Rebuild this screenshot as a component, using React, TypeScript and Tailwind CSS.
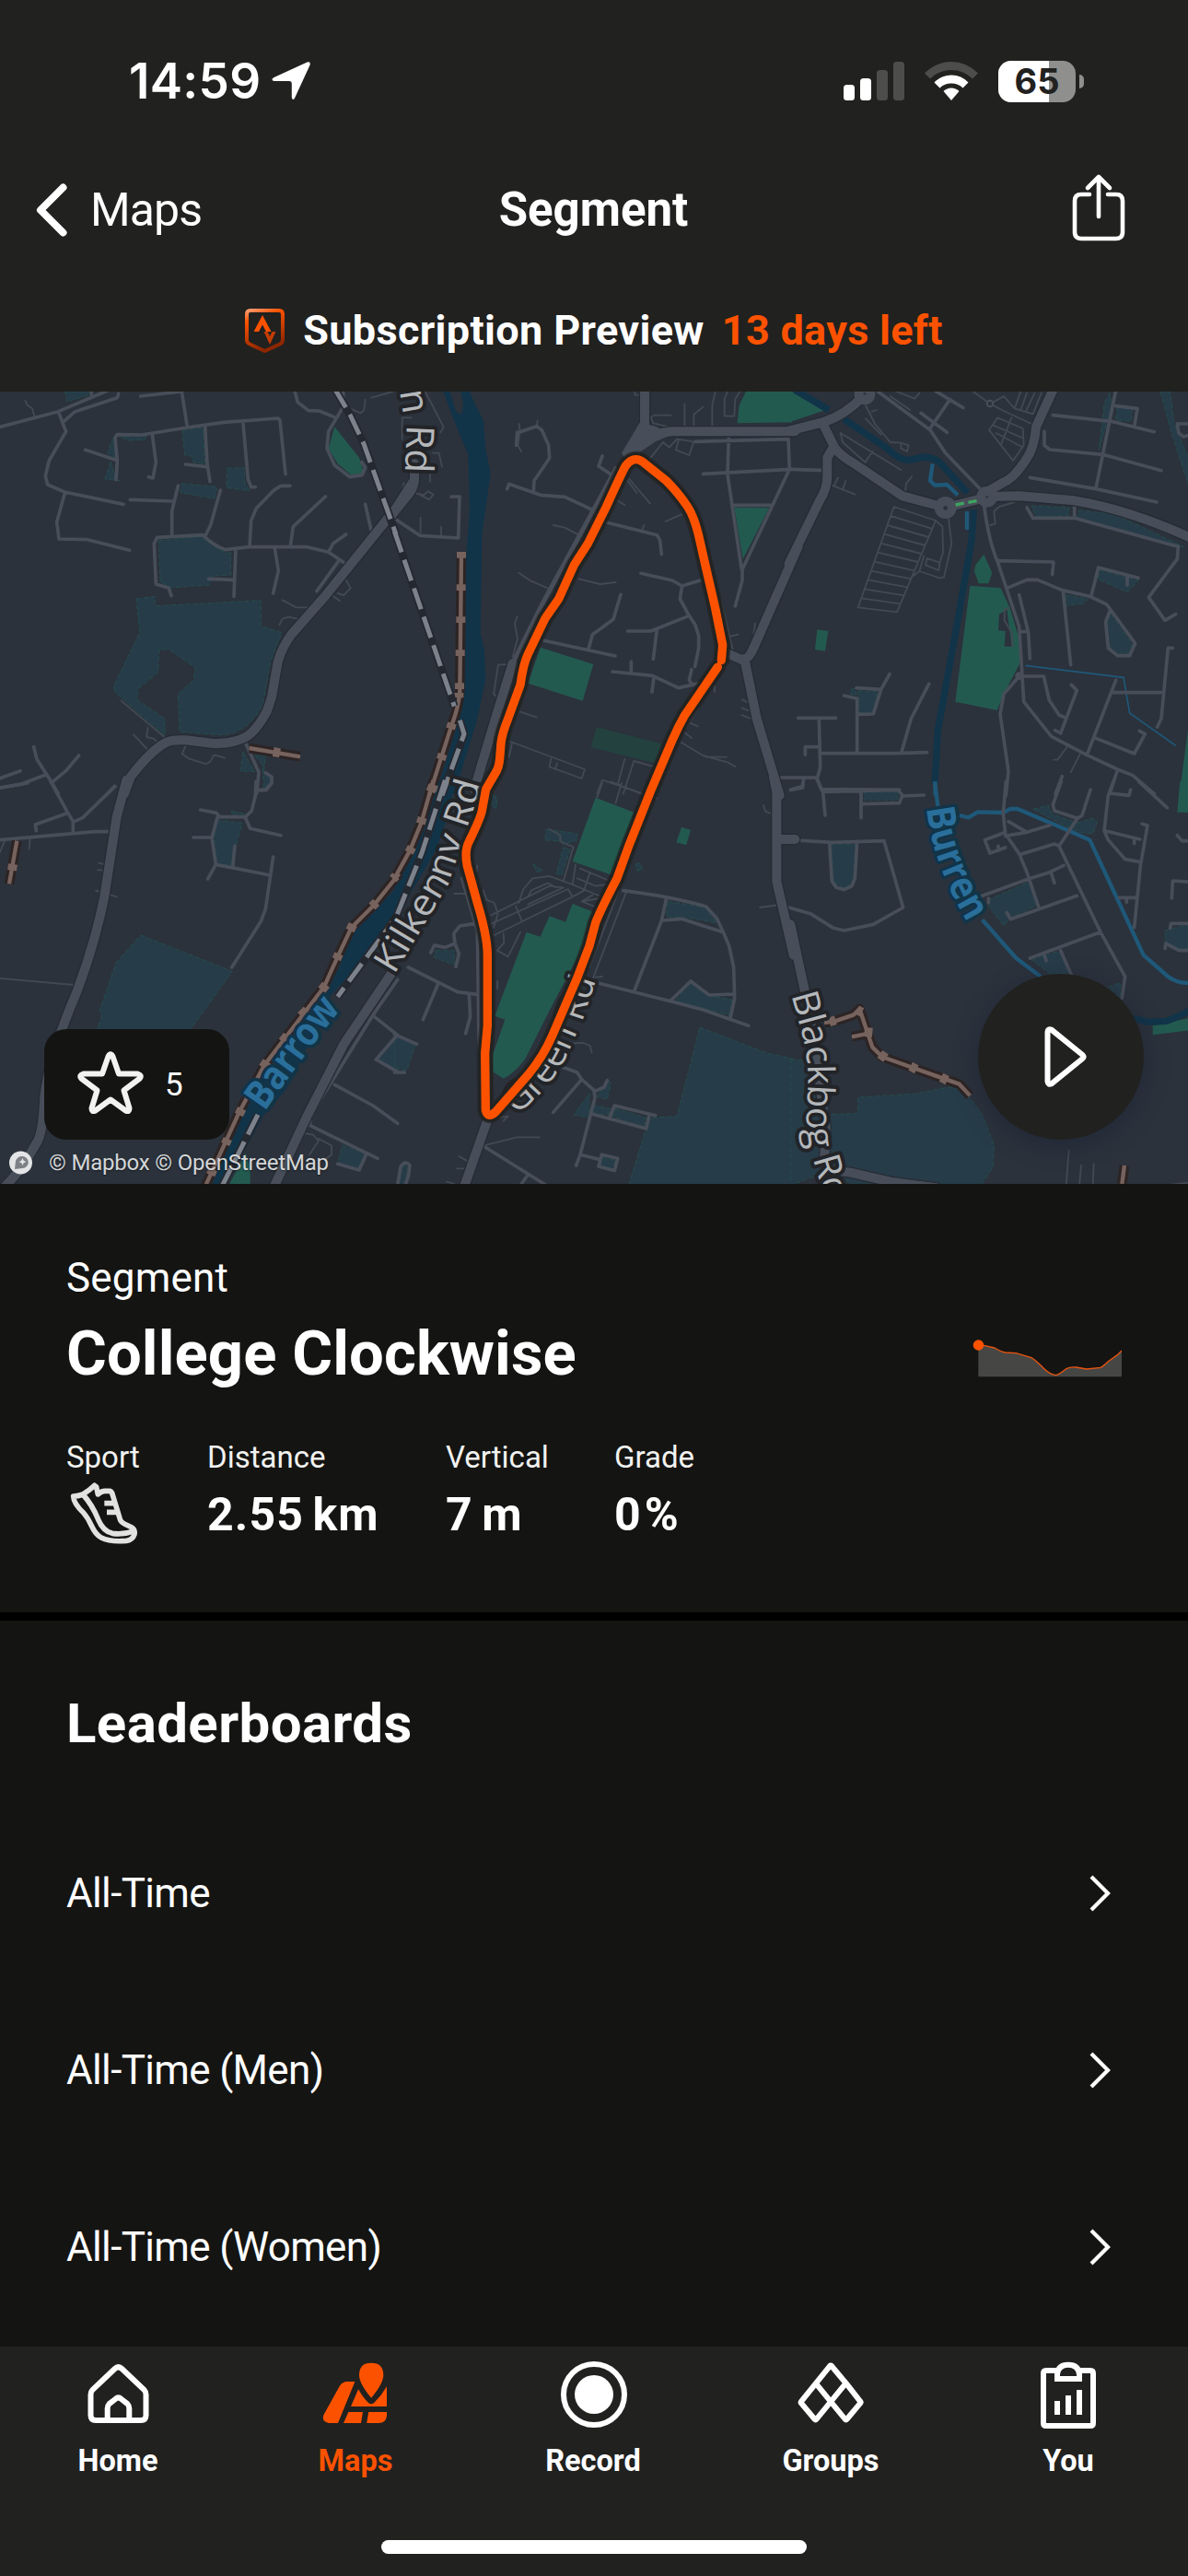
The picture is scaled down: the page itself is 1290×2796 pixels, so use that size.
import React from "react";

type Tile = {
  x: number;
  y: number;
  park?: string;
  green?: string;
  cut?: string;
  deep?: string;
  stream?: string;
  streamDeep?: string;
  thin?: string;
  minor?: string;
  major?: string;
  path?: string;
  pathTicks?: string;
  rail?: string;
};

/* Map geometry, one entry per map tile. Each tile uses 3 units per pixel. */
const TILES: Tile[] = [
  {
    x: 0,
    y: -5,
    park: "M212 15H292V25L218 48Z M388 160H480L470 172L420 174Z M370 165L350 215L375 230Z M360 245L342 300L390 305L378 300Z M594 142L660 132L668 250L630 245L625 225L602 222Z M740 265L795 262L798 312L812 338L738 328Z M592 315L707 325L698 364L588 344Z M518 500L655 487L700 520L735 540H752V612L700 615L680 645L560 653L522 635Z M445 690L505 682V713L850 695V778L918 800L880 900L855 1040Q800 1130 720 1133L585 1122L580 1000L630 955L637 915L548 853L518 858L515 928L448 985V1020L537 1080V1135L375 995L370 975L455 800Z M792 1190L830 1252H783Z M830 1200H865L860 1250L885 1280L860 1310L855 1230Z",
    green: "M1090 130L1170 230L1185 280L1145 287L1100 250L1070 200Z",
    minor:
      "M-10 133L190 80L350 12M190 80L215 145L160 240L148 290L155 318L210 342L402 382M208 112L245 80L382 35L386 22M298 15V30M212 342L185 440L192 495L285 497L422 532M458 30L592 15L610 130M378 302L382 240L375 165L382 155L462 156L610 132L730 115L905 102L912 108L930 284M278 205L378 238M496 155L508 245L498 297L484 293M668 130L675 250L684 308M604 252L672 260M792 118L808 300L818 326H832M580 322L560 405V484M424 367L562 372M718 336L686 450L668 486M558 680L550 655L508 642L502 510L512 490L660 482Q700 520 735 530L810 521H1000L1070 538L1130 578M813 520L818 435L835 395L890 338L915 322H945M946 518L955 455L1060 357M1070 538L1085 510L1127 480M1190 382L1212 480M895 525L907 598L890 672M768 525L762 682M680 625L762 628M1102 568L1032 665M960 12L970 50L1005 77L1040 78L1088 98M1118 12V65L1070 145L1065 200L1090 255L1140 293L1180 287L1190 262L1178 245M110 1172L120 1212L170 1290L190 1325M257 1200L215 1250L172 1285M-10 1307L70 1293L148 1263M66 1250L-10 1278M373 1300L350 1325M798 1155L843 1255L836 1325M840 1314L865 1312L885 1290V1270L865 1256",
    thin: "M82 45L90 60L105 70L112 95M1120 62L1175 85L1186 75L1190 42M1210 35L1280 15M1128 630L1142 655L1120 678L1100 672M1085 680L1107 697M920 694L965 718H1000M980 757L940 749L920 755L910 775M395 1022L545 1148M435 1132L485 1185M482 1110L477 1140L500 1145L520 1162M605 1168L593 1195L615 1210L672 1228L685 1220L697 1198L732 1208",
    major:
      "M1345 310L1290 395L1060 680L950 805Q920 845 905 895L885 1010L870 1055Q830 1130 790 1145Q740 1165 690 1160L605 1150Q560 1148 540 1158Q490 1185 425 1270L405 1325",
    path: "M812 1176L978 1204",
    pathTicks: "M890 1188L912 1192",
    rail: "M1090 5L1140 90L1185 185L1290 480",
  },
  {
    x: 430,
    y: -5,
    deep: "M155 15L185 100L235 220L240 400L228 560L215 1050L130 1325H190L265 1080L292 950L288 860L275 800L280 480L300 340L308 285L292 200L285 110L250 40L240 15H212L220 60L212 90L195 80L175 15Z",
    green:
      "M1140 15H1290V115L1112 118L1118 60Z M1102 392L1216 394L1130 560Z M470 848L643 903L608 1022L430 965Z",
    minor:
      "M-10 425L78 484L203 492L207 357H180M362 332L368 316L470 352L550 358L640 400M448 340L450 305L500 232L497 190L475 140L458 128L403 147M672 225L660 258L705 288M688 442L850 482L860 500L865 545M798 607L900 630L932 648L990 630M932 648L925 690L955 745L975 775L986 810V850L974 910M955 745L830 795H755M850 790L838 886M732 676L708 757L640 806L628 850M482 826L714 876M705 927L835 940L920 980L1010 960M766 894V932M840 945L834 993M963 920L955 955L965 968M1000 283L1290 268M1084 160L1080 285L1126 595M975 178L1278 170L1282 268L1128 595V630L1105 714M1096 385H1228M395 147L392 190",
    thin: "M80 474V425M147 484V455M60 345L90 352L105 340L122 350L108 367L80 352M40 320L25 313L20 345L38 340M95 15L155 130L145 148M150 260L140 215H120M20 170V100H50M111 270V308M458 128L461 110M400 120L405 147M403 147L397 190L408 210M513 450L550 458L595 482M400 605L440 632L505 660M595 625L665 642L716 636M395 748L387 770L396 820L380 880M375 904H333L318 1000L338 1016M750 300L785 345M760 300L828 380M722 370L745 385M878 438L930 415M808 450L800 470M405 1058L458 1076M1030 130V60L1040 15M1070 40V95H1102L1105 40L1120 15M1070 40L1080 15M840 92H896M835 95L830 100L838 118L890 130M940 130V55M970 130V90L1000 65M830 230L870 180L890 197L915 170L970 178L955 222L912 205L920 175M778 15V26H790M1060 700L1100 870M1090 812L1115 806M1165 805L1170 770M1128 1018L1155 1032M1126 1045L1155 1056M1126 1068L1160 1082M930 1158L1000 1200L1080 1222L1105 1236M1010 1205H1077M950 1090L983 1105M940 1125L963 1143M985 1045L945 1110M1038 975V993M373 1155L615 1245L605 1275L500 1237L505 1210M378 1160L368 1205M525 1225L518 1245M835 1235L775 1218L740 1325M672 1280L850 1340M745 1212L722 1295M672 1280L655 1325",
    major:
      "M60 250V305Q55 335 40 350L-20 425M810 5V130Q800 170 755 235M820 160Q850 150 900 145H1300M1310 520L1165 850Q1150 885 1130 890L1085 870M1135 885L1175 1080L1250 1330M380 900L330 1060L255 1310",
    path: "M213 540L208 990Q205 1040 180 1105L108 1330",
    pathTicks:
      "M213 537V557M212 643V663M211 748V768M209 856V876M207 964V984M205 996V1012M183 1095L177 1113M152 1195L146 1213M120 1298L112 1318",
    rail: "M-5 470L60 660L190 1040M208 1085L222 1130L150 1330",
  },
  {
    x: 860,
    y: -5,
    park: "M780 387L902 393L900 420L795 422Z M935 402L1050 415L1275 520H1250L930 430Z M1060 68L1108 70L1105 112L1055 108Z M1018 50L1035 20L1045 80L1030 100L1000 205Z M1200 15H1232L1245 120L1295 240V330L1240 160Z M1005 595L1128 630L1092 668L995 625Z M893 678L965 690L950 705L893 712Z M1040 740L1110 840L1095 868L1050 865L1028 830L1020 765Z M215 990L280 992L262 1062L220 1060Z M192 985L205 982L210 1005L190 1000Z",
    green:
      "M0 15L110 75L0 112Z M625 545L598 580L594 600L608 640H640L652 605Z M580 647L680 655L710 720L740 820L742 900L690 1000L668 1053L532 1025Z M82 790L118 795L108 860L75 855Z M1295 1080V1325H1262Z",
    cut: "M675 740L700 725L716 845H692L695 795L672 793Z",
    streamDeep:
      "M10 10L120 75M170 105L310 200Q350 240 380 238L430 228Q470 230 490 255L572 345M592 400L585 500L540 760L500 980L475 1120L465 1290",
    stream: "M458 250L450 305L465 320L505 318L540 352M570 405V465M466 1285L467 1330",
    minor:
      "M280 15L450 140L500 215L620 340M470 15L558 68M515 40L450 135M420 85L505 148M-10 268L110 272M625 380Q640 500 670 570L740 780L750 940L755 1025L845 1138L960 1198L1060 1245L1110 1265L1180 1325M672 566L852 570L848 610M700 655L765 628H800L880 662L970 682L1025 708L1045 735L1118 835L1100 875H1060L1030 850L1022 765L1035 730M975 680L998 588L1128 622M1092 615V645M883 665L908 905M740 677L770 800L775 885M745 797H768M765 393L785 427H920L1258 520L1255 560L1162 685L1215 760L1250 740M920 375V427M850 92L1040 112L1180 146M822 145V190L840 204L1012 220L1203 272M775 295L990 332L1188 375M990 330L1055 10M1055 62L1125 70L1115 130M1300 120H1255L1260 150L1275 162L1300 155M740 942H820L838 1020L870 1068L888 1076M910 970L928 988L875 1128L857 1118M740 942L690 1000L678 1065L705 1250L697 1330M1055 955L962 1195M1040 995H1208M1240 850H1225L1203 1080L1190 1107M985 1142L1115 1194L1150 1130L1132 1120M1060 1248L1035 1325M880 1268L858 1325M20 1078H143M88 1078L92 1240L82 1275L95 1310L350 1312M43 1198V1172H90M95 1193H345L440 1190M210 980L290 985L318 935M170 1005L212 1015V1190M218 1066L265 1065L290 985M446 967L388 1080L358 1185M-45 1272H80M0 1310L35 1300L38 1275",
    thin: "M332 390L215 718L342 733L468 435ZM321 420L457 462M311 450L445 489M300 479L434 516M289 509L422 543M279 539L411 570M268 569L399 598M258 599L388 625M247 628L376 652M236 658L365 679M226 688L353 706M468 435L490 455L492 540L480 575M510 430L520 510L495 620L480 622L415 600L430 550M440 558L482 572L478 597L435 580ZM388 620L415 600M158 150L355 270M158 150L165 180L238 245L262 210M240 60L270 120L320 180L355 182L380 190L375 210L355 200V182M240 103L290 155M275 75L260 80M320 30L385 75M340 15L400 38L415 20M590 15L645 55L690 78L780 120M645 55L690 30L725 70L785 88L812 20M745 75L765 20M725 70L745 15M762 80L790 20M670 100L752 135L755 190L720 240L642 140ZM655 125L750 165M665 150L748 195M715 100L680 190M130 320L205 350M150 295L138 320M175 305L165 335M368 350L372 315L390 292M725 375L675 390L658 405L662 445L645 450M718 845V805L692 760V725L708 720M898 1170L865 1214H852M938 1195L908 1255",
    major:
      "M235 28Q170 95 100 115L-10 143M100 118L140 200Q160 225 200 248L360 355L500 393M135 195L115 230V290Q115 330 90 370L-10 575M850 10L795 130Q790 200 760 240Q720 300 690 310L620 350M500 393L640 358M620 358L740 355L920 370Q1100 400 1300 492",
  },
  {
    x: 0,
    y: 425,
    park: "M458 495L757 613L615 810H312L332 760L325 740L378 585Z M705 120L790 130L765 215L750 268L705 262L698 180Z M755 90L800 102H755Z M1295 830L1222 900L1295 938Z M1115 1180L1190 1205L1165 1255L1100 1240Z",
    deep: "M1295 338L1150 480L1105 600L1060 680L930 860L790 1060L690 1310H735L860 1080L930 1000L960 950L1070 700L1180 580L1295 440Z",
    green: "M745 1310L800 1205L815 1250V1310Z",
    minor:
      "M-10 17L90 0M165 -5L220 95L238 125V160M375 10L270 112L238 127M118 155L115 135L218 98M-10 186L310 158H365M653 87L705 97L715 110H800L820 90L832 40L834 -5M843 22H868L885 0M800 115L815 148L915 170M630 177H690M708 112L690 178L703 265L677 312M703 265L880 300M758 275L765 205M890 240L865 410L850 450L755 600M1295 640L1215 755L1010 1085V1115L1230 1222M1215 757L1295 820M1290 825L1225 900L1295 940M1090 982L1215 1050L1295 1108M1100 1240L1170 1260L1195 1205",
    thin: "M-5 635L240 657M98 180L95 215M15 188L0 225M322 260L345 265M318 283H340M312 350L380 370M990 1140L1020 1145L1038 1165L1008 1210M1038 1158L1080 1180V1210L1060 1225",
    major:
      "M412 -10L380 110L340 370Q310 520 250 680Q160 890 145 1020Q140 1140 120 1170Q70 1260 15 1315M1275 620L1120 850L1000 1085L890 1320",
    path: "M55 188L30 328M1300 295L1220 395L1145 470L1100 565L1055 665L990 750L860 920L780 1070L670 1310",
    pathTicks:
      "M42 264L39 284M1290 302L1280 312M1226 388L1212 402M1150 460L1140 480M1104 556L1096 574M1062 656L1048 674M1000 738L980 758M936 822L920 842M870 906L856 926M788 1060L778 1080M742 1158L734 1176M694 1258L686 1276",
    rail: "M1295 430L1100 695M840 1080L722 1315",
  },
  {
    x: 430,
    y: 425,
    park: "M315 40L328 45V82L310 75Z M490 150L590 165V185L545 200L535 190L485 185Z M545 210L568 215L540 300L522 295Z M445 262L478 285L460 290Z M780 265L795 260L803 283L785 285Z M130 545L190 545V592L125 568Z M885 385L1010 405L1045 455L960 440L880 435Z M960 648L1015 690L1095 705L1085 755L910 710Z M-5 818L65 850L35 935L-5 930Z M990 795L1210 880L1295 898V1310H758L825 1090L915 1085Z M630 1010V1090L580 1080Z M690 970L700 975L688 1030L655 1020Z M715 1060L815 1090L808 1120L705 1085Z M640 1048L700 1060L690 1080L645 1075Z M672 1218L715 1228L705 1258L665 1245Z M0 1310L15 1250L35 1240L40 1260L25 1310Z",
    deep: "M130 -5H195L160 130L130 220L-5 445V335L30 270L60 200Z",
    green:
      "M650 47L775 95L705 300L575 255Z M930 143L960 153L945 202L913 193Z M575 393L650 422L600 552L500 740L420 900Q380 950 350 962L315 940V885L355 770L322 758L425 485L470 500L500 433L552 452Z",
    minor:
      "M740 350Q900 370 1010 402L1045 440L1068 490L1085 530L1100 600L1103 700L1090 762M880 378L865 448L775 680M868 447L930 442L1065 485M655 650L715 665L900 712L1000 738L1148 790M895 708L960 645L1020 690L1100 687M40 600L200 680L265 688M138 652L88 770M238 688L242 760L227 815M-5 818L68 850M-5 942H28M530 920L590 942L605 965L645 1000L648 1025L600 1210L587 1245M605 965L512 1072M648 1003L678 990L688 968M640 1078L815 1125L825 1082M697 1085L712 1050L845 1082M600 1210L660 1225M670 1210L722 1222L712 1262L660 1248ZM290 1185L490 1310M430 1275L405 1310M5 1310L15 1250Q30 1225 45 1245L40 1280L30 1310M113 552L125 528L160 535L192 522L188 490L208 465L270 455M192 522L205 555L195 598M215 310L265 480L270 820L285 1090",
    thin: "M750 355L640 640M725 350L630 600M285 1180L395 1153H468M205 1215L240 1235M198 1255H230M165 1298L190 1305M565 848L610 846L632 855L638 878M1197 72L1203 92L1225 100M1185 405L1250 396M400 390L415 345L445 310L500 303L570 328L645 360L700 380M310 430L500 335L545 340L430 395M320 495L575 370L560 345M305 460L560 345M390 400L410 448M430 370L440 350L495 325L520 340M500 150L535 170V190L578 208L545 320M575 330L585 265M575 370L612 350L632 290M600 278L695 318M590 310L650 335L690 330M605 385L640 365M605 385L655 405M605 385L665 375M285 350L295 380L320 390L332 425L318 470M405 485L365 565L330 545L352 520L350 490M190 360H225M655 47L672 0M715 65L735 0M700 -5L800 35M330 645V670M330 1090L365 1085L350 1100M650 632L672 630M0 1105H5M265 268L262 290",
    major: "M297 1100L220 1320M1230 -20L1240 30V320L1295 560M1245 183H1300",
    path: "M122 -10L82 130L45 220L-5 310",
    pathTicks: "M124 5L116 25M86 112L80 132M52 208L42 226",
    rail: "M160 -10L85 225L-5 450",
  },
  {
    x: 860,
    y: 425,
    park: "M235 30H345V55H235Z M128 200H207L200 320L170 345L135 320Z M785 85L835 72L845 100L930 130L975 115L995 125L980 165L940 160L900 145Z M640 380L775 320L795 400L710 440L690 465L640 400Z M780 575L875 545L905 620H840Z M1030 665L1070 650V700Z M1215 480L1295 460V540H1260L1215 520Z M-5 898L80 910L100 1080L215 1075V1023L400 1012L510 990L560 1000L620 1080L658 1180L655 1250L615 1310H190L150 1250L-5 1310Z",
    green: "M1264 -5H1295V95H1255Z M1175 790L1295 765V805L1175 820Z",
    stream:
      "M465 -5L475 75M545 105L575 112L605 94L690 96L710 84H735L890 150L970 185L1145 560L1225 630Q1260 655 1300 650M620 445L730 570L810 630",
    streamDeep: "M1110 765L1160 778L1220 775Q1260 760 1300 738",
    minor:
      "M80 -15L100 28L345 22L360 40L350 65L225 68M360 42L430 39M101 30L108 105M225 28V113M-35 183L130 193L300 188L362 405L265 460L170 480L135 472L60 425L-10 405M122 195L130 320L145 340L170 347L195 335L205 310L212 192M35 0V15L-5 22M697 -5L688 100L695 165L740 230L765 290L805 408M877 -5L850 70L855 90L930 115L945 105L972 22M930 115L870 205L855 198L745 232M690 162L628 185L645 228L695 210M672 205V220M705 125L765 160L695 172M765 160L840 137M612 370L770 312L840 290L885 268M843 290L855 325M640 375V390M928 367L712 443L700 422M870 205L1005 485L1085 630L1075 700M1005 485L775 570M822 560L828 578M875 545L910 625M1047 -5L1030 40L1017 155L1030 185L1085 248L1135 257M1020 155L1133 183M1115 180V197M1035 33L1098 40L1103 22M1140 133L1158 138L1135 270L1115 470M1065 373H1120M1090 373V388M1130 -5L1222 80M1255 170L1270 188H1300M1300 322L1240 318L1237 375M1300 457H1235L1232 472M1215 538L1218 522L1260 545H1300",
    thin: "M902 1195L893 1310M942 1245L936 1310M983 1240L980 1310M1230 1308L1300 1300",
    major: "M-5 460L25 600L60 760L110 1120L105 1240M130 1260L190 1268L330 1300L470 1318",
    path: "M105 780L140 775L200 755L220 735L245 810L262 860L295 892L545 980L580 1018M195 826L250 815M1083 1245L1075 1305",
    pathTicks:
      "M122 778L142 772M212 738L228 746M236 810L262 812M286 882L306 896M386 922L406 932M486 958L506 968",
  },
];

const ROUTE =
  "M1060 890L1064 840L1040 720L1010 590L985 480Q970 420 950 390Q920 345 880 305L805 245Q775 222 748 257Q735 280 685 390L625 510L580 580L530 690L485 755L430 870Q415 900 405 970L365 1080Q345 1130 342 1160L338 1210Q335 1240 325 1255L293 1310L280 1380Q275 1405 238 1480Q222 1510 232 1560L265 1680Q298 1790 298 1850V2080L290 2170L292 2355Q300 2385 325 2360L360 2320L430 2240Q480 2180 510 2110L590 1925L630 1820L650 1745Q665 1705 720 1600L760 1490L830 1315L900 1150Q920 1105 940 1070L1048 912";

type Key = Exclude<keyof Tile, "x" | "y">;

function Layer({ k, ...rest }: { k: Key } & React.SVGProps<SVGGElement>) {
  return (
    <g fill="none" strokeLinecap="round" strokeLinejoin="round" {...rest}>
      {TILES.filter((t) => t[k]).map((t) => (
        <path key={`${t.x}-${t.y}`} d={t[k]} transform={`translate(${t.x} ${t.y}) scale(0.33333)`} />
      ))}
    </g>
  );
}

function MapLabel({
  id,
  d,
  x,
  y,
  size,
  length,
  water,
  children,
}: {
  id: string;
  d: string;
  x: number;
  y: number;
  size: number;
  length: number;
  water?: boolean;
  children: string;
}) {
  return (
    <g transform={`translate(${x} ${y}) scale(0.33333)`}>
      <path id={id} d={d} fill="none" />
      <text
        fontSize={size}
        fontWeight={water ? 700 : 500}
        fill={water ? "#2a6f9b" : "#b5b8bb"}
        stroke={water ? "#113449" : "#222428"}
        strokeWidth={water ? 22 : 24}
        strokeLinejoin="round"
        style={{ paintOrder: "stroke" }}
        className="font-['Open_Sans',sans-serif]"
      >
        <textPath href={`#${id}`} textLength={length} lengthAdjust="spacingAndGlyphs">
          {children}
        </textPath>
      </text>
    </g>
  );
}

function StreetMap() {
  return (
    <svg viewBox="0 0 1290 860" className="block h-[860px] w-[1290px]">
      <rect width="1290" height="860" fill="#2b323c" />
      <Layer k="park" fill="#273c49" stroke="#24504c" strokeWidth={2.5} strokeDasharray="14 10" />
      <Layer k="green" fill="#235a50" />
      <path d="M653 1108L865 1162L845 1225L635 1174Z" fill="#23423f" transform="translate(430 -5) scale(0.33333)" />
      <Layer k="cut" fill="#2b323c" />
      <Layer k="deep" fill="#113449" />
      <Layer k="streamDeep" stroke="#113449" strokeWidth={22} strokeLinecap="butt" />
      <Layer k="stream" stroke="#1f5878" strokeWidth={13} strokeLinecap="butt" />
      <path
        d="M760 907L1080 946L1100 1062L1250 1168"
        fill="none"
        stroke="#1f5878"
        strokeWidth={5}
        transform="translate(860 -5) scale(0.33333)"
      />
      <Layer k="thin" stroke="#434953" strokeWidth={5.5} />
      <Layer k="minor" stroke="#484e59" strokeWidth={11} />
      <Layer k="major" stroke="#262c35" strokeWidth={38} />
      <Layer k="major" stroke="#484e59" strokeWidth={30} />
      <g transform="translate(430 -5) scale(0.33333)" fill="none" stroke="#484e59">
        <path d="M720 260L480 700L375 910" strokeWidth={15} />
        <path d="M795 115L735 215L755 250L795 212L845 178L890 160L850 130Z" fill="#484e59" stroke="none" />
      </g>
      <g transform="translate(860 -5) scale(0.33333)">
        <circle cx="500" cy="393" r="36" fill="#484e59" />
        <circle cx="500" cy="394" r="7" fill="#2b323c" />
        <circle cx="635" cy="358" r="34" fill="#484e59" />
        <circle cx="635" cy="358" r="5" fill="#333a44" />
        <circle cx="237" cy="24" r="34" fill="#484e59" />
        <circle cx="237" cy="22" r="5" fill="#333a44" />
        <circle cx="645" cy="54" r="10" fill="#2b323c" stroke="#484e59" strokeWidth="6" />
        <circle cx="740" cy="941" r="13" fill="#484e59" />
        <path d="M533 384L605 370" stroke="#3fa35f" strokeWidth="10" strokeDasharray="28 14" />
      </g>
      <Layer k="path" stroke="#2d2424" strokeWidth={32} strokeLinecap="butt" />
      <Layer k="path" stroke="#77635e" strokeWidth={13} strokeLinecap="butt" />
      <Layer k="pathTicks" stroke="#77635e" strokeWidth={30} strokeLinecap="butt" />
      <Layer k="rail" stroke="#242830" strokeWidth={26} strokeLinecap="butt" />
      <Layer k="rail" stroke="#7c828c" strokeWidth={15} strokeDasharray="72 26" strokeLinecap="butt" />

      <MapLabel id="lbl-n" x={430} y={-5} size={126} length={266} d="M12 14L24 90L34 150L28 320">
        n Rd
      </MapLabel>
      <MapLabel id="lbl-kilkenny" x={0} y={425} size={120} length={690} d="M1284 625L1460 330L1545 80L1580 -40">
        Kilkenny Rd
      </MapLabel>
      <MapLabel id="lbl-green" x={430} y={425} size={120} length={520} d="M392 1080Q510 990 560 880L615 750L665 600">
        Green Rd
      </MapLabel>
      <MapLabel
        id="lbl-blackbog"
        x={860}
        y={425}
        size={120}
        length={690}
        d="M-2 690C25 790 50 860 52 950C53 1040 40 1090 53 1170L88 1290L130 1420"
      >
        Blackbog Rd
      </MapLabel>
      <MapLabel id="lbl-barrow" x={0} y={425} size={128} length={418} water d="M862 1070Q980 900 1110 735">
        Barrow
      </MapLabel>
      <MapLabel id="lbl-burren" x={860} y={425} size={128} length={398} water d="M438 82Q458 270 585 475">
        Burren
      </MapLabel>

      <g transform="translate(430 -5) scale(0.33333)" fill="none" strokeLinecap="round" strokeLinejoin="round">
        <path d={ROUTE} stroke="#232321" strokeOpacity={0.55} strokeWidth={54} />
        <path d={ROUTE} stroke="#232321" strokeWidth={46} />
        <path d={ROUTE} stroke="#fc5200" strokeWidth={28} />
      </g>

      <g transform="translate(22.5 837)">
        <circle r="12.5" fill="#e3e4e5" />
        <path d="M-6.5 7L-5.500 -2A7 6.500 0 1 1 2 6Z" fill="#7d8085" />
        <path d="M2-5L3.200-2.200L6-1L3.200.2L2 3L.8.2L-2-1L.8-2.200Z" fill="#e3e4e5" />
      </g>
    </svg>
  );
}

function StatusBar() {
  return (
    <div className="flex h-[176px] items-center justify-between pr-[113px] pl-[140px]">
      <div className="flex items-center gap-3 font-['Inter',sans-serif]">
        <span className="text-[53px] leading-[60px] font-semibold tracking-[0.3px]">14:59</span>
        <svg viewBox="0 0 42 42" className="size-[42px]" fill="#fff">
          <path d="M38.5.6Q42.5-.8 41.6 3.4L25 39.4Q23 43 21.8 39V24Q21.8 21 19 21H3Q-1.600 20.200 2 17.200Z" />
        </svg>
      </div>
      <div className="flex items-center">
        <svg viewBox="0 0 66 42" className="h-[42px] w-[66px]">
          <rect x="0" y="25" width="12" height="17" rx="3.500" fill="#fff" />
          <rect x="18" y="18" width="12" height="24" rx="3.500" fill="#fff" />
          <rect x="36" y="9" width="12" height="33" rx="3.500" fill="#4d4d4b" />
          <rect x="54" y="0" width="12" height="42" rx="3.500" fill="#4d4d4b" />
        </svg>
        <svg viewBox="0 0 58 42" className="ml-[22px] h-[42px] w-[58px]">
          <path d="M0 12.500Q12.500 0 29 0T58 12.500L52 18.500Q42.500 9 29 9T6 18.500Z" fill="#4d4d4b" />
          <path d="M10.500 22.500Q18 14.500 29 14.500T47.500 22.500L41.500 28.500Q36.500 23.500 29 23.500T16.500 28.500Z" fill="#fff" />
          <path d="M20.500 32Q24 28.500 29 28.500T37.500 32L29 42Z" fill="#fff" />
        </svg>
        <div className="relative ml-[22px] flex h-[45px] w-[84px] items-center justify-center overflow-hidden rounded-[14px] bg-[#8f8f8d]">
          <div className="absolute inset-y-0 left-0 w-[55px] bg-white" />
          <span className="relative font-['Inter',sans-serif] text-[38px] leading-none font-bold text-[#21211f]">65</span>
        </div>
        <div className="ml-1 h-[15px] w-[5px] rounded-r-full bg-[#8f8f8d]" />
      </div>
    </div>
  );
}

function NavBar() {
  return (
    <div className="grid h-[104px] grid-cols-3 items-center pr-[67px] pl-[37px]">
      <div className="flex items-center">
        <svg
          viewBox="0 0 37 60"
          className="h-[60px] w-[37px]"
          fill="none"
          stroke="#fff"
          strokeWidth="8"
          strokeLinecap="round"
          strokeLinejoin="round"
        >
          <path d="M31.500 5.500L7 30L31.500 54.500" />
        </svg>
        <span className="ml-[24px] text-[50px] leading-[60px] tracking-[-0.900px]">Maps</span>
      </div>
      <h1 className="pl-[29px] text-center text-[51px] leading-[60px] font-bold whitespace-nowrap">Segment</h1>
      <svg
        viewBox="0 0 60 74"
        className="mb-1.5 h-[74px] w-[60px] justify-self-end"
        fill="none"
        stroke="#fff"
        strokeWidth="4.600"
        strokeLinecap="round"
        strokeLinejoin="round"
      >
        <path d="M20 23H11Q4 23 4 30V64Q4 71 11 71H49Q56 71 56 64V30Q56 23 49 23H40" />
        <path d="M30 47V4M18 16L30 4L42 16" />
      </svg>
    </div>
  );
}

function PreviewBanner() {
  return (
    <div className="flex h-[145px] items-center justify-center pt-3 text-[45px] leading-[60px] font-bold">
      <svg viewBox="0 0 43 48" className="mr-5 h-[48px] w-[43px]" fill="none">
        <defs>
          <linearGradient id="shield" x1="0" y1="0" x2="0.300" y2="1">
            <stop offset="0" stopColor="#ff9a70" />
            <stop offset="0.250" stopColor="#fc5200" />
            <stop offset="1" stopColor="#8f2600" />
          </linearGradient>
        </defs>
        <path
          d="M6 2H37Q41 2 41 6V34Q41 37 38 38.500L21.500 46L5 38.500Q2 37 2 34V6Q2 2 6 2Z"
          stroke="url(#shield)"
          strokeWidth="4"
        />
        <path d="M19 7L28.500 25H23L19 17.500L15 25H9.500Z" fill="#fc5200" />
        <path d="M20.500 25H24.500L27 30L29.500 25H33.500L27 39Z" fill="#c23c00" />
      </svg>
      <span className="tracking-[0.350px]">Subscription Preview</span>
      <span className="ml-[19px] tracking-[0.300px] text-[#fc5200]">13 days left</span>
    </div>
  );
}

function Elevation() {
  const line =
    "M187 182L205 183L240 191Q260 203 275 206L310 208L360 223Q375 232 400 258Q420 278 440 280Q450 278 475 258Q490 253 505 254L540 260L585 255Q595 250 610 235L640 214L654 200";
  return (
    <svg viewBox="168 155 486 135" className="h-[45px] w-[162px]" fill="none">
      <path d={`${line}V285H187Z`} fill="#464644" />
      <path d={line} stroke="#e85410" strokeWidth="4" />
      <circle cx="187.500" cy="182" r="17.500" fill="#fc5200" />
    </svg>
  );
}

function ShoeIcon() {
  return (
    <svg
      viewBox="36 144 240 210"
      className="h-[70px] w-[80px]"
      fill="none"
      stroke="#e2e2e0"
      strokeWidth="17"
      strokeLinejoin="round"
    >
      <path d="M90 186Q113 172 128 157L134 162L139 186Q150 175 162 175H175Q184 175 186 185L212 270Q216 278 225 282L250 294Q261 302 258 316Q252 334 232 337Q180 342 150 327Q132 318 118 288Q106 262 92 246Q60 216 59 192Q75 192 90 186Z" />
      <path d="M90 186Q122 222 140 268Q156 306 186 313Q220 318 256 306" />
      <path d="M160 215H194M168 244H204" />
    </svg>
  );
}

function Stat({ label, value, wide }: { label: string; value: React.ReactNode; wide?: boolean }) {
  return (
    <div>
      <div className="text-[33px] leading-[40px] text-[#f2f2f0]">{label}</div>
      <div
        className={
          wide
            ? "mt-3 h-[60px] text-[50px] leading-[60px] font-bold tracking-[4px]"
            : "mt-3 h-[60px] text-[50px] leading-[60px] font-bold tracking-[1.100px] whitespace-nowrap [word-spacing:-4px]"
        }
      >
        {value}
      </div>
    </div>
  );
}

function LeaderboardRow({ label }: { label: string }) {
  return (
    <div className="flex h-[192px] items-center justify-between pr-[11px]">
      <span className="text-[44px] leading-[60px] tracking-[-0.650px]">{label}</span>
      <svg viewBox="0 0 26 42" className="h-[42px] w-[26px]" fill="none" stroke="#fff" strokeWidth="4.200">
        <path d="M4 3L22 21L4 39" />
      </svg>
    </div>
  );
}

function Tab({ label, active, children }: { label: string; active?: boolean; children: React.ReactNode }) {
  return (
    <div
      className={
        active ? "flex flex-1 flex-col items-center text-[#fc5200]" : "flex flex-1 flex-col items-center text-white"
      }
    >
      <svg viewBox="0 0 84 84" className="size-[84px]" fill="none" stroke="currentColor" strokeWidth="6">
        {children}
      </svg>
      <span className="mt-2.5 pr-0.5 text-[32.500px] leading-[40px] font-bold">{label}</span>
    </div>
  );
}

function TabBar() {
  return (
    <nav className="flex h-[249px] shrink-0 flex-col bg-[#21211f] pt-2.5">
      <div className="flex">
        <Tab label="Home">
          <path d="M37.700 14L13.600 36.800Q11.500 39 11.500 42V64.500Q11.500 70 17 70H66Q71.500 70 71.500 64.500V42Q71.500 39 69.400 36.800L45.300 14Q41.500 10.500 37.700 14Z" />
          <path d="M29.700 70V57Q29.700 54 31.700 52L38.500 46.800Q41.500 44 44.500 46.800L51.300 52Q53.300 54 53.300 57V70" />
        </Tab>
        <Tab label="Maps" active>
          <g fill="currentColor" stroke="none">
            <path d="M58.100 7.700Q71.300 7.700 71.300 21Q71.300 30 58.100 45.700Q45 30 45 21Q45 7.700 58.100 7.700Z" />
            <path d="M32 28H40.400L22 73H12Q3.500 71 6.500 64L24 32.500Q27 28 32 28Z" />
            <path d="M44.100 36.300Q50 46.500 55 51Q58.100 53.500 61.200 51Q69 43.500 75 33.300V55H36Z" />
            <path d="M33.400 61H49L47 73H28Z" />
            <path d="M55.200 61H75V65Q74 73 66.400 73H53.200Z" />
          </g>
        </Tab>
        <Tab label="Record">
          <circle cx="42" cy="42" r="33" />
          <circle cx="42" cy="42" r="21" fill="currentColor" stroke="none" />
        </Tab>
        <Tab label="Groups">
          <path
            strokeLinejoin="round"
            d="M57.600 29.700L41.700 10.800Q41 10 40.300 10.800L9 49.600Q8.300 50.500 9 51.400L23.800 69Q24.600 70 25.400 69L57.600 29.700L73.200 49.600Q74 50.500 73.200 51.400L58.400 69Q57.600 70 56.800 69L24.600 29.700"
          />
        </Tab>
        <Tab label="You">
          <path d="M29 16H17Q14 16 14 19V73Q14 76 17 76H65Q68 76 68 73V19Q68 16 65 16H53" />
          <path d="M29 25V20Q30 9.700 41 9.700T53 20V25Z" />
          <path d="M29 64V49M41 64V43M53 64V37" />
        </Tab>
      </div>
      <div className="mx-auto mt-[66px] h-[15px] w-[462px] rounded-full bg-white" />
    </nav>
  );
}

export default function App() {
  return (
    <div className="flex h-[2796px] w-[1290px] flex-col overflow-hidden bg-[#141412] font-['Roboto',sans-serif] text-white">
      <header className="h-[425px] shrink-0 bg-[#21211f]">
        <StatusBar />
        <NavBar />
        <PreviewBanner />
      </header>

      <div className="relative h-[860px] shrink-0 overflow-hidden">
        <StreetMap />
        <div className="absolute top-[692px] left-[48px] flex h-[120px] w-[201px] items-center rounded-[24px] bg-[#141412] pl-[35px]">
          <svg
            viewBox="0 0 74 72"
            className="mb-1 h-[72px] w-[74px]"
            fill="none"
            stroke="#f2f2f0"
            strokeWidth="6"
            strokeLinejoin="round"
          >
            <path d="M34.700 7.300Q37 3 39.300 7.300L46 26.500H66.500Q71.500 28 68.800 31.500L51.500 44.500L57.500 64Q57.500 68.500 53.500 66.500L37 54.500L20.500 66.500Q16.500 68.500 16.500 64L22.500 44.500L5.200 31.500Q2.500 28 7.500 26.500H28Z" />
          </svg>
          <span className="ml-[22px] text-[35px] leading-none">5</span>
        </div>
        <div className="absolute top-[632px] left-[1062px] flex size-[180px] items-center justify-center rounded-full bg-[#21211f] pl-[10px] shadow-[0_6px_24px_rgba(30,36,52,0.7)]">
          <svg viewBox="0 0 48 68" className="h-[68px] w-[48px]" fill="none" stroke="#fff" strokeWidth="6" strokeLinejoin="round">
            <path d="M4.500 7Q5 3 9 4.800L42.500 32Q44.500 34 42.500 36L9 63.200Q5 65 4.500 61Z" />
          </svg>
        </div>
        <div className="absolute top-[821px] left-[53px] font-['Roboto',sans-serif] text-[24px] leading-[32px] tracking-[-0.200px] text-[#d4d6d8] [text-shadow:0_1px_2px_rgba(0,0,0,0.5)]">
          © Mapbox © OpenStreetMap
        </div>
      </div>

      <section className="h-[465px] shrink-0 px-[72px] pt-[72px]">
        <div className="text-[44px] leading-[60px] tracking-[0.200px]">Segment</div>
        <div className="mt-3 flex h-[80px] items-center justify-between">
          <h2 className="text-[67px] leading-[80px] font-bold tracking-[0.100px]">College Clockwise</h2>
          <div className="pt-2">
            <Elevation />
          </div>
        </div>
        <div className="mt-[53px] grid grid-cols-[153px_259px_183px_1fr]">
          <Stat
            label="Sport"
            value={
              <div className="-mt-1.5">
                <ShoeIcon />
              </div>
            }
          />
          <Stat label="Distance" value="2.55 km" />
          <Stat label="Vertical" value="7 m" />
          <Stat label="Grade" value="0%" wide />
        </div>
      </section>

      <div className="h-[9px] shrink-0 bg-black" />

      <section className="min-h-0 flex-1 px-[72px] pt-[72px]">
        <h2 className="mb-12 text-[60px] leading-[80px] font-bold tracking-[0.400px]">Leaderboards</h2>
        <LeaderboardRow label="All-Time" />
        <LeaderboardRow label="All-Time (Men)" />
        <LeaderboardRow label="All-Time (Women)" />
      </section>

      <TabBar />
    </div>
  );
}
